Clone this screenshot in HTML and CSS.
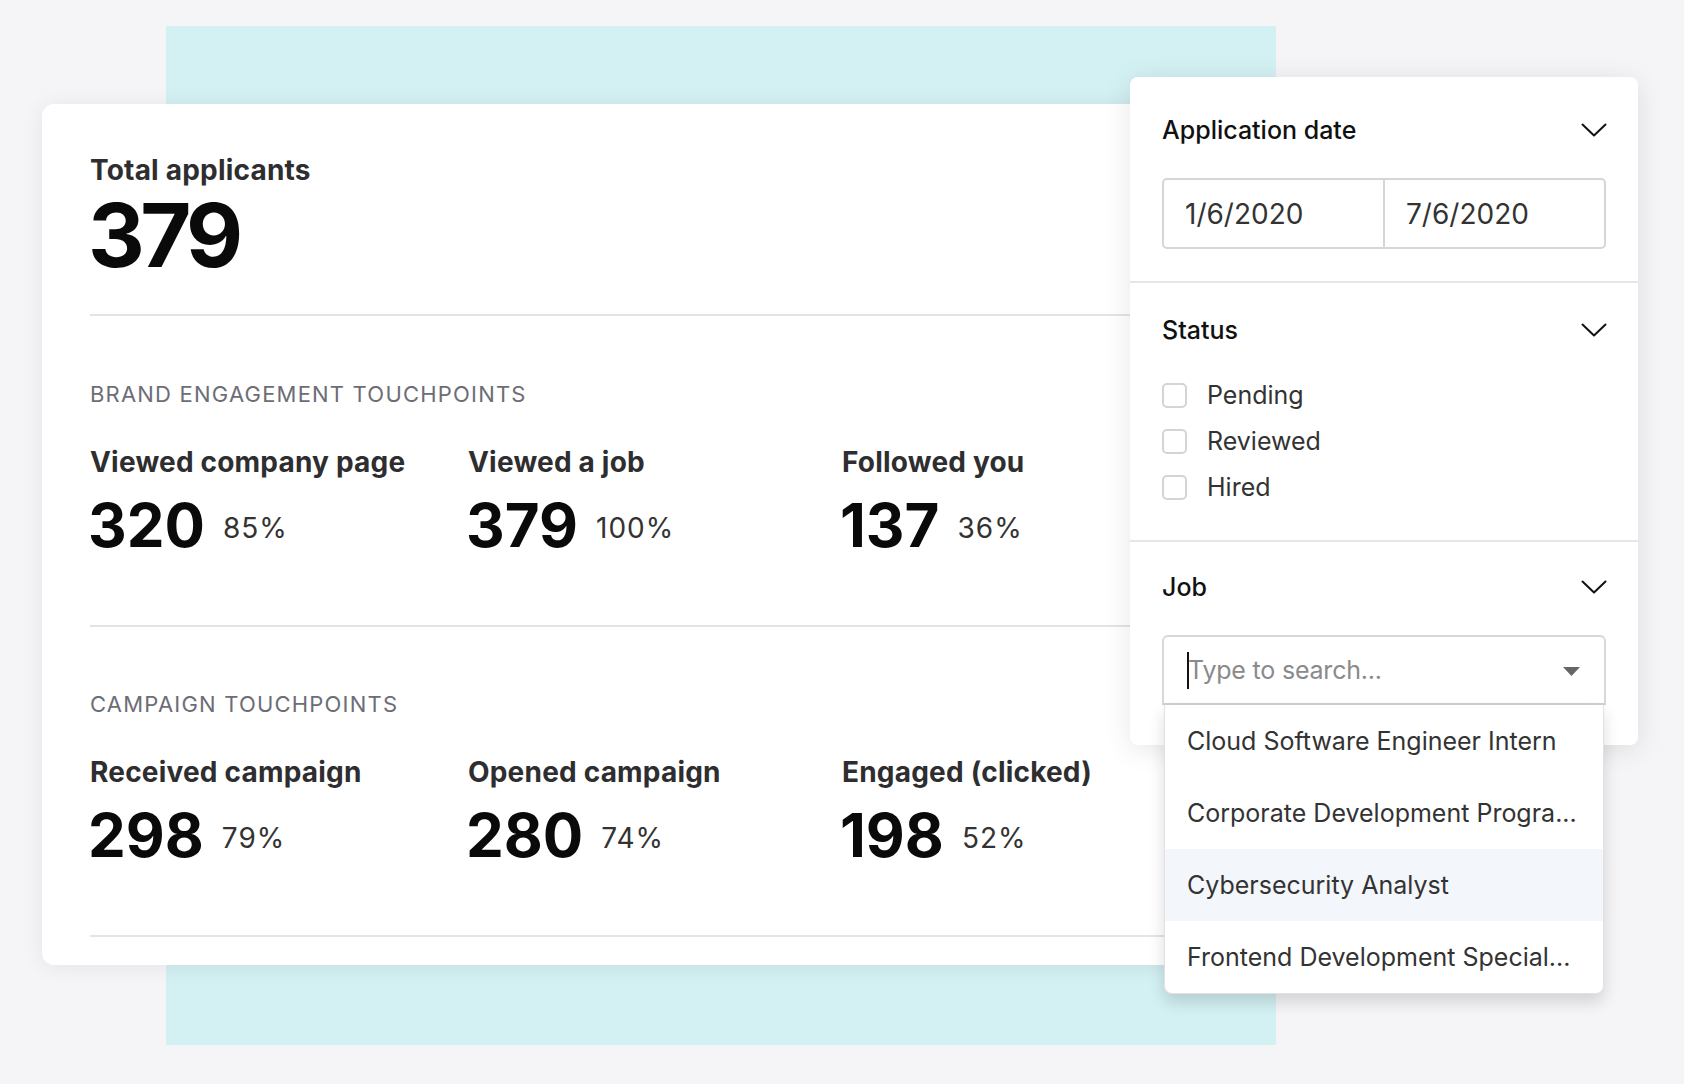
FILE: index.html
```html
<!DOCTYPE html>
<html lang="en">
<head>
<meta charset="utf-8">
<title>Applicant insights</title>
<link rel="stylesheet" href="styles.css">
</head>
<body>
<div class="stage">
  <div class="backdrop"></div>

  <section class="card">
    <div class="total">
      <div class="label">Total applicants</div>
      <div class="big">379</div>
    </div>

    <div class="group">
      <div class="group-title">BRAND ENGAGEMENT TOUCHPOINTS</div>
      <div class="metrics">
        <div class="metric">
          <div class="label">Viewed company page</div>
          <div class="value"><span class="num">320</span><span class="pct">85%</span></div>
        </div>
        <div class="metric">
          <div class="label">Viewed a job</div>
          <div class="value"><span class="num">379</span><span class="pct">100%</span></div>
        </div>
        <div class="metric">
          <div class="label">Followed you</div>
          <div class="value"><span class="num">137</span><span class="pct">36%</span></div>
        </div>
      </div>
    </div>

    <div class="group">
      <div class="group-title">CAMPAIGN TOUCHPOINTS</div>
      <div class="metrics">
        <div class="metric">
          <div class="label">Received campaign</div>
          <div class="value"><span class="num">298</span><span class="pct">79%</span></div>
        </div>
        <div class="metric">
          <div class="label">Opened campaign</div>
          <div class="value"><span class="num">280</span><span class="pct">74%</span></div>
        </div>
        <div class="metric">
          <div class="label">Engaged (clicked)</div>
          <div class="value"><span class="num">198</span><span class="pct">52%</span></div>
        </div>
      </div>
    </div>
  </section>

  <aside class="filters">
    <div class="fsec fsec-first">
      <div class="fhead">
        <span class="ftitle">Application date</span>
        <svg class="chev" width="26" height="14" viewBox="0 0 26 14"><path d="M1.5 1.5 L13 12.5 L24.5 1.5" fill="none" stroke="#111" stroke-width="2" stroke-linecap="round" stroke-linejoin="round"/></svg>
      </div>
      <div class="daterange">
        <div class="datefield">1/6/2020</div>
        <div class="datefield">7/6/2020</div>
      </div>
    </div>

    <div class="fsec">
      <div class="fhead">
        <span class="ftitle">Status</span>
        <svg class="chev" width="26" height="14" viewBox="0 0 26 14"><path d="M1.5 1.5 L13 12.5 L24.5 1.5" fill="none" stroke="#111" stroke-width="2" stroke-linecap="round" stroke-linejoin="round"/></svg>
      </div>
      <ul class="checks">
        <li class="check"><span class="box"></span>Pending</li>
        <li class="check"><span class="box"></span>Reviewed</li>
        <li class="check"><span class="box"></span>Hired</li>
      </ul>
    </div>

    <div class="fsec fsec-last">
      <div class="fhead">
        <span class="ftitle">Job</span>
        <svg class="chev" width="26" height="14" viewBox="0 0 26 14"><path d="M1.5 1.5 L13 12.5 L24.5 1.5" fill="none" stroke="#111" stroke-width="2" stroke-linecap="round" stroke-linejoin="round"/></svg>
      </div>
      <div class="search">
        <span class="cursor"></span>
        <span class="placeholder">Type to search...</span>
        <svg class="caret" width="17" height="9" viewBox="0 0 17 9"><path d="M0 0 H17 L8.5 9 Z" fill="#666"/></svg>
        <ul class="options">
          <li class="option">Cloud Software Engineer Intern</li>
          <li class="option">Corporate Development Progra...</li>
          <li class="option option-active">Cybersecurity Analyst</li>
          <li class="option">Frontend Development Special...</li>
        </ul>
      </div>
    </div>
  </aside>
</div>
</body>
</html>
```

FILE: styles.css
```css
* { box-sizing: border-box; }

html, body {
  margin: 0;
  padding: 0;
  background: #f5f5f7;
  font-family: Inter, "Noto Sans", "Liberation Sans", sans-serif;
  color: #333;
}

.stage {
  position: relative;
  width: 1684px;
  height: 1084px;
  padding: 104px 0 0 42px;
  overflow: hidden;
}

.backdrop {
  position: absolute;
  left: 166px;
  top: 26px;
  width: 1110px;
  height: 1019px;
  background: #d3f0f2;
}

/* ---------- main card ---------- */
.card {
  position: relative;
  z-index: 1;
  width: 1208px;
  height: 861px;
  padding-left: 48px;
  background: #fff;
  border-radius: 12px;
  box-shadow: 0 2px 22px rgba(0, 0, 0, 0.07);
}

.total {
  padding: 49px 0 35px;
  border-bottom: 2px solid #e4e4e6;
}

.label {
  font-size: 28px;
  line-height: 34px;
  font-weight: 700;
  color: #2e2e30;
  letter-spacing: 0.2px;
}

.big {
  margin-top: 4px;
  margin-left: -2px;
  font-size: 88px;
  line-height: 88px;
  font-weight: 700;
  color: #0a0a0a;
  letter-spacing: -4.5px;
}

.group {
  padding: 65px 0 70px;
  border-bottom: 2px solid #e4e4e6;
}

.group + .group { padding-top: 64px; }

.group-title {
  font-size: 22px;
  line-height: 26px;
  color: #6c6d76;
  letter-spacing: 1.2px;
}

.metrics {
  margin-top: 38px;
  display: grid;
  grid-template-columns: 378px 374px 1fr;
}

.value {
  margin-top: 16px;
  display: flex;
  align-items: center;
  gap: 18px;
}

.num {
  margin-left: -2px;
  font-size: 60px;
  line-height: 60px;
  font-weight: 700;
  color: #0a0a0a;
  letter-spacing: 0;
}

.pct {
  margin-top: 5px;
  font-size: 28px;
  line-height: 30px;
  color: #333;
  letter-spacing: 1px;
}

/* ---------- filter panel ---------- */
.filters {
  position: absolute;
  z-index: 2;
  left: 1130px;
  top: 77px;
  width: 508px;
  background: #fff;
  border-radius: 8px;
  box-shadow: 0 4px 28px rgba(0, 0, 0, 0.10);
}

.fsec {
  padding: 32px 32px 30px;
  border-bottom: 2px solid #e6e6e8;
}

.fsec-first { padding-top: 38px; padding-bottom: 32px; }
.fsec-last { padding-top: 30px; padding-bottom: 40px; border-bottom: none; }

.fhead {
  display: flex;
  align-items: center;
  justify-content: space-between;
  height: 30px;
}

.ftitle {
  font-size: 25px;
  line-height: 30px;
  font-weight: 500;
  color: #111;
}

.chev { display: block; margin-right: -1px; }

.daterange {
  margin-top: 33px;
  display: flex;
  height: 71px;
  border: 2px solid #d6d6d8;
  border-radius: 5px;
}

.datefield {
  flex: 1;
  display: flex;
  align-items: center;
  padding-left: 21px;
  font-size: 28px;
  color: #333;
}

.datefield + .datefield { border-left: 2px solid #d6d6d8; }

.checks {
  list-style: none;
  margin: 27px 0 0;
  padding: 0;
}

.check {
  display: flex;
  align-items: center;
  height: 46px;
  font-size: 25px;
  color: #333;
}

.box {
  width: 25px;
  height: 25px;
  margin-right: 20px;
  border: 2px solid #d4d4d6;
  border-radius: 5px;
  background: #fff;
}

.search {
  position: relative;
  margin-top: 33px;
  height: 70px;
  display: flex;
  align-items: center;
  padding: 0 24px 0 23px;
  border: 2px solid #d8d8da;
  border-bottom-color: #cfcfd1;
  border-radius: 6px 6px 0 0;
}

.cursor {
  width: 2px;
  height: 37px;
  background: #111;
}

.placeholder {
  margin-left: -1px;
  font-size: 25px;
  color: #8a8a8c;
  letter-spacing: -0.2px;
}

.caret { margin-left: auto; display: block; margin-top: 2px; }

.options {
  position: absolute;
  left: 0;
  right: 0;
  top: 68px;
  list-style: none;
  margin: 0;
  padding: 0;
  background: #fff;
  border: 1px solid #e2e2e4;
  border-top: none;
  border-radius: 0 0 8px 8px;
  box-shadow: 0 8px 16px rgba(0, 0, 0, 0.14);
  overflow: hidden;
}

.option {
  height: 72px;
  display: flex;
  align-items: center;
  padding-left: 22px;
  font-size: 25px;
  color: #333;
  white-space: nowrap;
}

.option-active { background: #f3f6fb; }
```
